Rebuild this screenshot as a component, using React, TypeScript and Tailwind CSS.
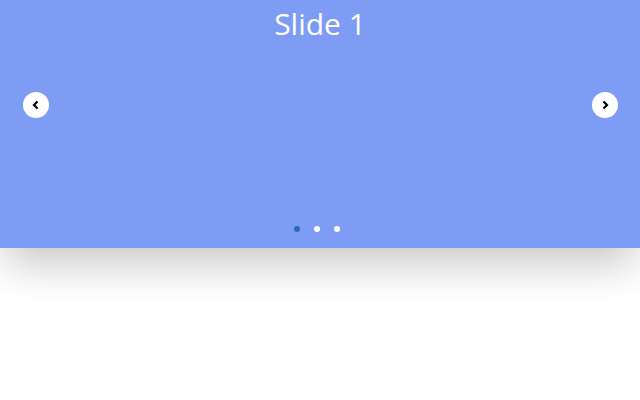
import React, { useState } from 'react';

const slides = ['Slide 1', 'Slide 2', 'Slide 3'];

const App: React.FC = () => {
  const [current, setCurrent] = useState(0);

  const prev = () => setCurrent((current + slides.length - 1) % slides.length);
  const next = () => setCurrent((current + 1) % slides.length);

  return (
    <div className="w-[640px] h-[400px] bg-white" style={{ fontFamily: '"Open Sans", "Noto Sans", sans-serif' }}>
      <div className="relative h-[248px] bg-[#7f9cf5] shadow-[0_22px_40px_-6px_rgba(0,0,0,0.22)]">
        <h1 className="pt-[4px] text-center text-[30px] leading-[40px] text-white">{slides[current]}</h1>

        <button
          onClick={prev}
          className="absolute left-[23px] top-[92px] flex h-[26px] w-[26px] items-center justify-center rounded-full bg-white text-black"
        >
          <svg width="8" height="10" viewBox="0 0 8 10">
            <path d="M5.5 1.5 L2 5 L5.5 8.5" fill="none" stroke="#000" strokeWidth="2.2" />
          </svg>
        </button>
        <button
          onClick={next}
          className="absolute right-[22px] top-[92px] flex h-[26px] w-[26px] items-center justify-center rounded-full bg-white text-black"
        >
          <svg width="8" height="10" viewBox="0 0 8 10">
            <path d="M2.5 1.5 L6 5 L2.5 8.5" fill="none" stroke="#000" strokeWidth="2.2" />
          </svg>
        </button>

        <div className="absolute bottom-[16px] left-0 right-0 flex justify-center gap-[14px] pr-[6px]">
          {slides.map((s, i) => (
            <button
              key={s}
              onClick={() => setCurrent(i)}
              className={`h-[6px] w-[6px] rounded-full ${i === current ? 'bg-[#2b6cb0]' : 'bg-white'}`}
            />
          ))}
        </div>
      </div>
    </div>
  );
};

export default App;
